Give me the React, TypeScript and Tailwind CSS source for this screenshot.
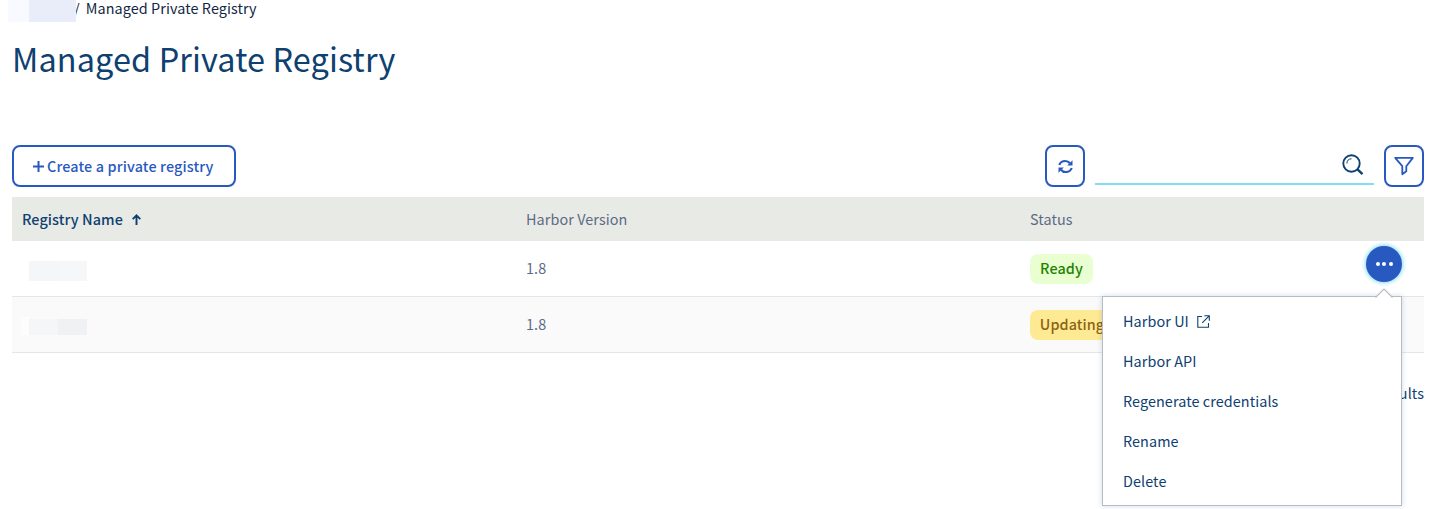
import React from "react";

const menuItems = ["Harbor UI", "Harbor API", "Regenerate credentials", "Rename", "Delete"];

function RefreshIcon() {
  return (
    <svg width="15" height="15" viewBox="0 0 15 15" fill="none" stroke="#2859c0" strokeWidth="2.200">
      <path d="M1.300 6C2.200 3.400 4.400 2 7.200 2c2 0 3.600.8 4.800 2.300" />
      <path d="M13.700 9c-.9 2.600-3.100 4-5.900 4-2 0-3.600-.8-4.800-2.300" />
      <path d="M14.500 1.200v5.300H9.200z" fill="#2859c0" stroke="none" />
      <path d="M.500 13.800V8.500h5.300z" fill="#2859c0" stroke="none" />
    </svg>
  );
}

function SearchIcon() {
  return (
    <svg width="22" height="22" viewBox="0 0 22 22" fill="none" stroke="#0e4070">
      <circle cx="9.500" cy="9.500" r="8.200" strokeWidth="1.900" />
      <path d="M15.200 15.200l5.300 5" strokeWidth="2.400" />
      <path d="M4.900 9.500a4.800 4.800 0 0 1 4.600-4.700" strokeWidth="1" />
    </svg>
  );
}

function FilterIcon() {
  return (
    <svg width="20" height="20" viewBox="0 0 20 20" fill="none" stroke="#2859c0" strokeWidth="1.800" strokeLinejoin="round">
      <path d="M1.200 1.900h17.600l-6.500 8.300v5.100L8.300 18.300v-8.100z" />
    </svg>
  );
}

function ExternalIcon() {
  return (
    <svg width="13" height="13" viewBox="0 0 13 13" fill="none" stroke="#0e4070" strokeWidth="1.100">
      <path d="M5 1.500H.800v10.700h10.700V8" />
      <path d="M7.300.700h5v5M12.200.800L5.200 7.800" />
    </svg>
  );
}

function ActionMenu() {
  return (
    <div className="absolute right-[22px] top-[5px] z-10 h-[36px] w-[36px]">
      <button className="flex h-[36px] w-[36px] items-center justify-center gap-[2.500px] rounded-full bg-[#2859c0] shadow-[0_0_4px_1px_#85d9f5]">
        <span className="h-[4px] w-[4px] rounded-full bg-white" />
        <span className="h-[4px] w-[4px] rounded-full bg-white" />
        <span className="h-[4px] w-[4px] rounded-full bg-white" />
      </button>
      <div className="absolute right-0 top-[50px] flex h-[210px] w-[300px] flex-col border border-[#b9bbbf] bg-white py-[4px] pl-[20px] text-[#0e4070] shadow-[0_0_6px_rgba(0,80,170,0.2)]">
        <svg className="absolute right-[8px] top-[-9px]" width="18" height="10" viewBox="0 0 18 10">
          <path d="M.500 9.500L9 1l8.500 8.500" fill="#fff" stroke="#b9bbbf" strokeWidth="1.200" />
        </svg>
        {menuItems.map((item, i) => (
          <div key={item} className="flex h-[40px] items-center gap-[8px]">
            <span>{item}</span>
            {i === 0 && <ExternalIcon />}
          </div>
        ))}
      </div>
    </div>
  );
}

export default function App() {
  return (
    <div className="h-[509px] overflow-hidden bg-white pl-[12px] pr-[10px] font-['Noto_Sans_CJK_SC',sans-serif] text-[14.4px] leading-[20px] tracking-[0.08px] text-[#0e4070]">
      <nav className="-ml-[4px] flex h-[22px] leading-[16px] text-[#122844]">
        <span className="relative z-10 w-[21px] bg-[#f9faff]" />
        <span className="relative z-10 w-[47px] bg-[#e9edf9]" />
        <span className="-ml-[2px]">/</span>
        <span className="ml-[6px]">Managed Private Registry</span>
      </nav>
      <h1 className="mt-[14px] h-[44px] text-[32.400px] leading-[44px] tracking-[0.13px]">Managed Private Registry</h1>

      <div className="mt-[65px] flex h-[42px]">
        <button className="flex h-[42px] w-[224px] items-center gap-[3px] rounded-[8px] border-2 border-[#2859c0] pl-[19px] font-medium tracking-[0.13px] text-[#2859c0]">
          <svg width="11" height="11" viewBox="0 0 11 11" stroke="#2859c0" strokeWidth="2">
            <path d="M5.500 0v11M0 5.500h11" />
          </svg>
          <span>Create a private registry</span>
        </button>
        <button className="ml-auto flex h-[42px] w-[40px] items-center justify-center rounded-[8px] border-2 border-[#2859c0]">
          <RefreshIcon />
        </button>
        <div className="ml-[10px] flex h-[40px] w-[279px] justify-end border-b-2 border-[#85d9f9] pr-[10px] pt-[9px]">
          <SearchIcon />
        </div>
        <button className="ml-[10px] flex h-[42px] w-[40px] items-center justify-center rounded-[8px] border-2 border-[#2859c0]">
          <FilterIcon />
        </button>
      </div>

      <div className="mt-[10px] text-[#5c6b85]">
        <div className="grid h-[44px] grid-cols-[504px_504px_1fr] items-center bg-[#e8eae5] pl-[10px]">
          <div className="flex items-center gap-[9px] font-medium text-[#0e4070]">
            <span>Registry Name</span>
            <svg width="9" height="11" viewBox="0 0 9 11" fill="none" stroke="#0e4070" strokeWidth="1.900">
              <path d="M4.500 11V1.500M.700 5.200l3.800-3.800 3.800 3.800" />
            </svg>
          </div>
          <div>Harbor Version</div>
          <div>Status</div>
        </div>
        <div className="relative grid h-[56px] grid-cols-[504px_504px_1fr] items-center border-b border-[#e6e7e5] pl-[10px]">
          <div className="mt-[4px] ml-[7px] flex h-[20px]">
            <span className="w-[29px] bg-[#f5f6f8]" />
            <span className="w-[29px] bg-[#f6f7f9]" />
          </div>
          <div className="pb-[1px]">1.8</div>
          <div>
            <span className="flex h-[30px] w-[63px] items-center justify-center rounded-[8px] bg-[#eaffd1] pb-[2px] font-medium text-[#1f8300]">Ready</span>
          </div>
          <ActionMenu />
        </div>
        <div className="grid h-[56px] grid-cols-[504px_504px_1fr] items-center border-b border-[#e6e7e5] bg-[#fafafa] pl-[10px]">
          <div className="mt-[2px] -ml-[1px] flex h-[18px] items-end">
            <span className="h-[18px] w-[8px] bg-[#fdfdfe]" />
            <span className="h-[16px] w-[29px] bg-[#f5f6f8]" />
            <span className="h-[16px] w-[29px] bg-[#f0f1f3]" />
          </div>
          <div className="pb-[1px]">1.8</div>
          <div>
            <span className="flex h-[30px] w-[84px] items-center justify-center rounded-[8px] bg-[#ffea94] pb-[2px] font-medium text-[#8d6213]">Updating</span>
          </div>
        </div>
      </div>
      <div className="mt-[30px] text-right">results</div>
    </div>
  );
}
